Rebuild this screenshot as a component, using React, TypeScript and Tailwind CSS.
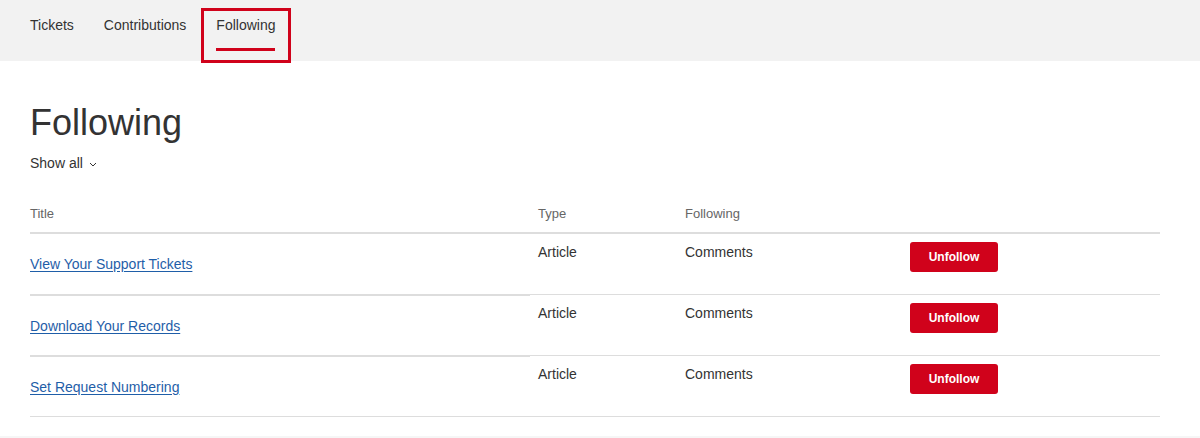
import React from "react";

const rows = [
  { title: "View Your Support Tickets" },
  { title: "Download Your Records" },
  { title: "Set Request Numbering" },
];

export default function App() {
  return (
    <div className="min-h-[438px] bg-white text-[#333333]" style={{ fontFamily: '"Liberation Sans", Arial, sans-serif' }}>
      <nav className="relative z-10 flex h-[61px] bg-[#f2f2f2] pl-[15px] text-[14px] leading-5 text-[#333333]">
        <a className="px-[15px] pt-[15px]">Tickets</a>
        <a className="px-[15px] pt-[15px]">Contributions</a>
        <a className="relative px-[15px] pt-[15px]">
          Following
          <span className="absolute left-[15px] right-[15px] top-[48px] h-[3px] bg-[#d0021b]" />
          <span className="absolute left-0 -right-px top-[8px] h-[55px] border-[3px] border-[#d0021b]" />
        </a>
      </nav>

      <main className="px-[30px]">
        <h1 className="mt-[40px] text-[36px] leading-[43px] font-normal text-[#333333]">Following</h1>
        <div className="mt-[9px] flex items-center gap-[6px] text-[14px] leading-5">
          <span>Show all</span>
          <svg width="8" height="5" viewBox="0 0 8 5" className="mt-[3px]">
            <path d="M1 1l3 3 3-3" fill="none" stroke="#333333" strokeWidth="1" />
          </svg>
        </div>

        <div className="mt-[32px] w-[1130px]">
          <div className="flex h-[29px] border-b-2 border-[#dddddd] text-[13px] leading-[18px] text-[#666666]">
            <div className="w-[500px]">Title</div>
            <div className="w-[147px] pl-2">Type</div>
            <div className="w-[225px] pl-2">Following</div>
            <div className="flex-1 pl-2"></div>
          </div>

          {rows.map((r, i) => (
            <div
              key={r.title}
              className={
                "flex text-[14px] leading-5 " +
                (i === 0 ? "h-[60px]" : "h-[61px]") +
                (i === rows.length - 1 ? " box-content border-b border-[#dddddd]" : "")
              }
            >
              <div
                className={
                  "flex w-[500px] items-center " +
                  (i === 0 ? "" : "border-t-2 border-[#dddddd]")
                }
              >
                <a className="text-[#1f5ea8] underline underline-offset-[2px]">{r.title}</a>
              </div>
              <div className={"w-[147px] pl-2 pt-2 " + (i === 0 ? "" : "border-t border-[#dddddd]")}>Article</div>
              <div className={"w-[225px] pl-2 pt-2 " + (i === 0 ? "" : "border-t border-[#dddddd]")}>Comments</div>
              <div className={"flex-1 pl-2 pt-2 " + (i === 0 ? "" : "border-t border-[#dddddd]")}>
                <button className="h-[30px] w-[88px] rounded-[3px] bg-[#d0021b] text-[12px] font-bold text-white">
                  Unfollow
                </button>
              </div>
            </div>
          ))}
        </div>
      </main>
      <div className="mt-[19px] h-[40px] bg-[#f6f6f6]" />
    </div>
  );
}
